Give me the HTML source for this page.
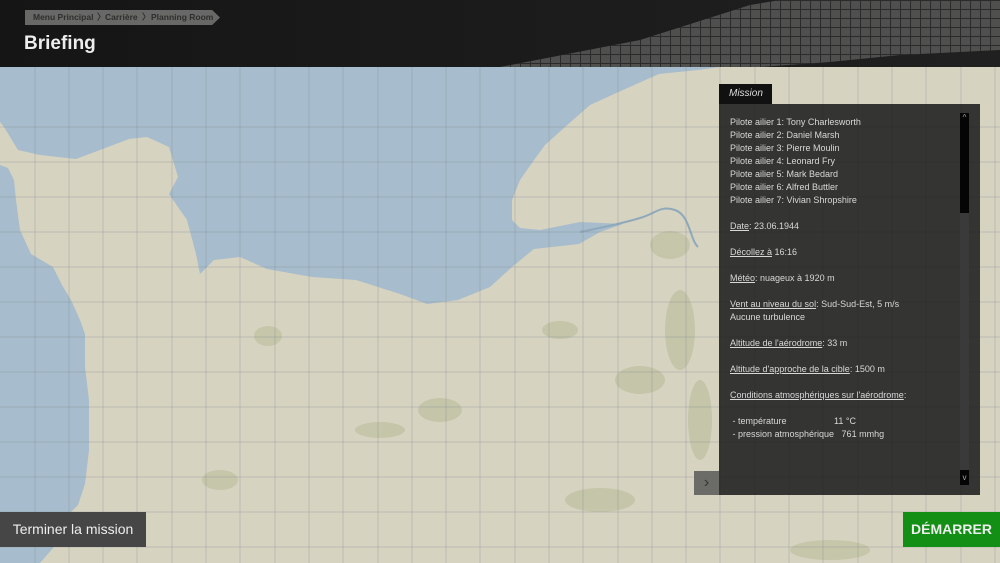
<!DOCTYPE html>
<html><head><meta charset="utf-8"><style>
body{margin:0;width:1000px;height:563px;overflow:hidden;position:relative;font-family:"Liberation Sans",sans-serif;background:#d6d2bf}
#hdr{position:absolute;left:0;top:0;width:1000px;height:67px;background:linear-gradient(90deg,#151515 0%,#1b1b1b 50%,#202020 100%);overflow:hidden}
#grid{position:absolute;left:0;top:0;width:1000px;height:67px;background-color:#4f4f4d;background-image:linear-gradient(90deg,#2a2a2a 1px,transparent 1px),linear-gradient(#2a2a2a 1px,transparent 1px);background-size:10px 9px;clip-path:polygon(500px 67px,640px 40px,750px 5px,780px 0,1000px 0,1000px 50px,900px 55px,830px 62px,760px 67px)}
#bc{position:absolute;left:25px;top:10px;height:15px;width:195px;background:#686866;clip-path:polygon(0 0,96% 0,100% 50%,96% 100%,0 100%)}
#bc span{position:absolute;top:0;font-size:8.5px;font-weight:bold;color:#2e2e2e;line-height:15px;white-space:nowrap}
#title{position:absolute;left:24px;top:33px;color:#eee;font-size:19px;font-weight:bold}
#map{position:absolute;left:0;top:67px}
#tab{position:absolute;left:719px;top:84px;width:53px;height:20px;background:#111;color:#ddd;font-style:italic;font-size:10px;line-height:20px;padding-left:10px;box-sizing:border-box}
#panel{position:absolute;left:719px;top:104px;width:261px;height:391px;background:rgba(30,30,30,.88);color:#d8d8d8;font-size:9px;line-height:13px;padding:12px 0 0 11px;box-sizing:border-box}
#sb{position:absolute;left:960px;top:113px;width:9px;height:372px;background:#3a3a3a}
#sbt{position:absolute;left:960px;top:113px;width:9px;height:100px;background:#050505;color:#aaa;font-size:8px;text-align:center;line-height:10px}
#sbb{position:absolute;left:960px;top:470px;width:9px;height:15px;background:#050505;color:#aaa;font-size:8px;text-align:center;line-height:15px}
#arr{position:absolute;left:694px;top:471px;width:25px;height:24px;background:#6b6b68;color:#333;font-size:16px;text-align:center;line-height:24px}
#term{position:absolute;left:0;top:512px;width:146px;height:35px;background:#464646;color:#eee;font-size:14px;line-height:35px;text-align:center}
#dem{position:absolute;left:903px;top:512px;width:97px;height:35px;background:#128f14;color:#eee;font-size:14px;font-weight:bold;line-height:35px;text-align:center}
</style></head><body>
<div id="hdr"><div id="grid"></div>
<div id="bc"><span style="left:8px">Menu Principal</span><span style="left:72px">〉</span><span style="left:80px">Carrière</span><span style="left:117px">〉</span><span style="left:126px">Planning Room</span></div>
<div id="title">Briefing</div></div>
<svg id="map" width="1000" height="496" viewBox="0 67 1000 496">
<rect x="0" y="67" width="1000" height="496" fill="#d7d3c1"/>
<path fill="#a7bccc" d="M0 67 H720 L698 70 659 74 623 90 590 105 565 127 545 145 534 160 520 180 512 200 512 220 520 228 540 230 580 222 623 224 600 232 579 244 534 249 512 267 490 287 458 300 427 304 400 294 356 280 312 277 267 269 240 257 214 260 200 274 196 254 187 220 169 194 178 177 169 147 147 137 129 139 100 150 76 159 40 155 18 150 4 127 0 122 Z"/>
<path fill="#a7bccc" d="M0 165 L8 168 14 180 16 200 20 230 31 254 53 267 62 285 71 300 80 320 85 334 85 367 89 400 89 450 85 484 78 505 71 512 60 540 40 563 H0 Z"/>
<path fill="none" stroke="#8fa9bb" stroke-width="2" d="M580 232 C600 228 620 224 640 218 C655 214 660 205 675 210 C690 215 690 240 698 247"/>
<g fill="#c0c1a2" opacity=".75">
<ellipse cx="268" cy="336" rx="14" ry="10"/><ellipse cx="440" cy="410" rx="22" ry="12"/><ellipse cx="560" cy="330" rx="18" ry="9"/><ellipse cx="640" cy="380" rx="25" ry="14"/><ellipse cx="220" cy="480" rx="18" ry="10"/><ellipse cx="680" cy="330" rx="15" ry="40"/><ellipse cx="830" cy="550" rx="40" ry="10"/><ellipse cx="600" cy="500" rx="35" ry="12"/><ellipse cx="670" cy="245" rx="20" ry="14"/><ellipse cx="700" cy="420" rx="12" ry="40"/><ellipse cx="380" cy="430" rx="25" ry="8"/>
</g>
<g stroke="#7a8690" stroke-opacity=".3" stroke-width="1">
<path d="M35 67V563M69 67V563M103 67V563M137 67V563M172 67V563M206 67V563M240 67V563M275 67V563M309 67V563M343 67V563M378 67V563M412 67V563M446 67V563M480 67V563M515 67V563M549 67V563M583 67V563M618 67V563M652 67V563M686 67V563M720 67V563M755 67V563M789 67V563M823 67V563M858 67V563M892 67V563M926 67V563M961 67V563M995 67V563"/>
<path d="M0 127H1000M0 162H1000M0 197H1000M0 232H1000M0 267H1000M0 302H1000M0 337H1000M0 372H1000M0 407H1000M0 442H1000M0 477H1000M0 512H1000M0 547H1000"/>
</g>
</svg>
<div id="tab">Mission</div>
<div id="panel">Pilote ailier 1: Tony Charlesworth<br>Pilote ailier 2: Daniel Marsh<br>Pilote ailier 3: Pierre Moulin<br>Pilote ailier 4: Leonard Fry<br>Pilote ailier 5: Mark Bedard<br>Pilote ailier 6: Alfred Buttler<br>Pilote ailier 7: Vivian Shropshire<br><br><u>Date</u>: 23.06.1944<br><br><u>Décollez à</u> 16:16<br><br><u>Météo</u>: nuageux à 1920 m<br><br><u>Vent au niveau du sol</u>: Sud-Sud-Est, 5 m/s<br>Aucune turbulence<br><br><u>Altitude de l'aérodrome</u>: 33 m<br><br><u>Altitude d'approche de la cible</u>: 1500 m<br><br><u>Conditions atmosphériques sur l'aérodrome</u>:<br><br>&nbsp;- température&nbsp;&nbsp;&nbsp;&nbsp;&nbsp;&nbsp;&nbsp;&nbsp;&nbsp;&nbsp;&nbsp;&nbsp;&nbsp;&nbsp;&nbsp;&nbsp;&nbsp;&nbsp;&nbsp;11 °C<br>&nbsp;- pression atmosphérique&nbsp;&nbsp; 761 mmhg</div>
<div id="sb"></div><div id="sbt">^</div><div id="sbb">v</div>
<div id="arr">›</div>
<div id="term">Terminer la mission</div>
<div id="dem">DÉMARRER</div>
</body></html>
